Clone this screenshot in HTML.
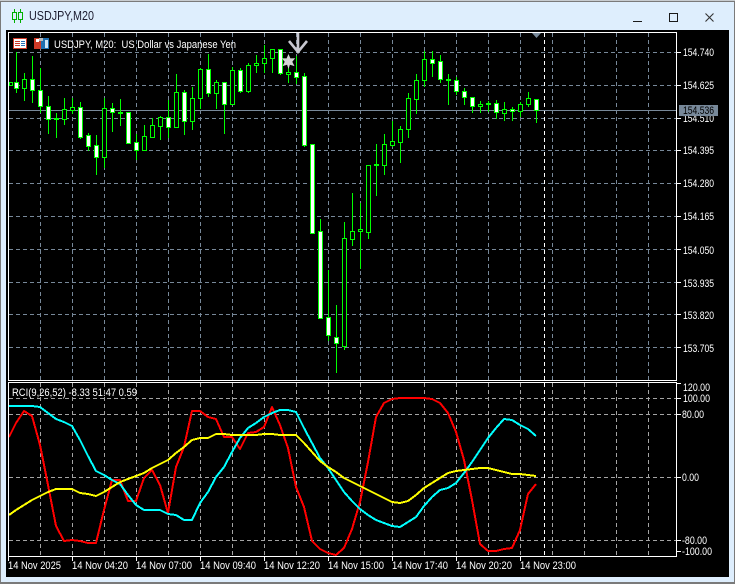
<!DOCTYPE html>
<html><head><meta charset="utf-8"><title>USDJPY,M20</title>
<style>
html,body{margin:0;padding:0;width:735px;height:584px;overflow:hidden;background:#fff}
svg{display:block}
text{font-family:"Liberation Sans",sans-serif;font-size:11px;fill:#fff}
</style></head><body>
<svg width="735" height="584" viewBox="0 0 735 584" xmlns="http://www.w3.org/2000/svg">
<rect x="0" y="0" width="735" height="584" fill="#7a7a7a"/>
<rect x="0" y="0" width="735" height="1" fill="#c8ccd0"/>
<rect x="1" y="2" width="733" height="580" fill="#deeefd"/>
<rect x="6" y="30" width="723" height="547" fill="#000"/>

<!-- title bar -->
<g fill="none" stroke="#00b000" shape-rendering="crispEdges">
<path d="M12.5 12.5h4v7h-4zM14.5 9v3M14.5 20v3M18.5 12.5h4v7h-4zM20.5 9v3M20.5 20v3"/>
</g>
<text x="29" y="20" style="font-size:12.5px;fill:#1c1c30" textLength="65" lengthAdjust="spacingAndGlyphs">USDJPY,M20</text>
<g fill="none" stroke="#1a1a1a" shape-rendering="crispEdges">
<path d="M633 21.5h9"/><path d="M669.5 13.5h8v8h-8z"/>
</g>
<path d="M705.5 13.5l8 8M713.5 13.5l-8 8" fill="none" stroke="#333" stroke-width="1.1"/>

<!-- grid main -->
<g fill="none" stroke="#778899" stroke-dasharray="4 3" shape-rendering="crispEdges">
<path d="M9 52.5H676M9 85.5H676M9 118.5H676M9 150.5H676M9 183.5H676M9 216.5H676M9 249.5H676M9 282.5H676M9 314.5H676M9 347.5H676"/>
<path d="M40.5 33V380M72.5 33V380M104.5 33V380M136.5 33V380M168.5 33V380M200.5 33V380M232.5 33V380M264.5 33V380M296.5 33V380M328.5 33V380M360.5 33V380M392.5 33V380M424.5 33V380M456.5 33V380M488.5 33V380M520.5 33V380M552.5 33V380M584.5 33V380M616.5 33V380M648.5 33V380"/>
</g>
<path d="M544.5 33V380" stroke="#fff" stroke-dasharray="4 3" fill="none" shape-rendering="crispEdges"/>
<path d="M9 110.5H676" stroke="#778899" fill="none" shape-rendering="crispEdges"/>

<!-- candles -->
<g shape-rendering="crispEdges">
<path fill="none" stroke="#00ff00" d="M16.5 52V93M24.5 73V101M32.5 56V103M40.5 68V113M48.5 96V134M56.5 113V138M64.5 98V125M72.5 98V114M80.5 102V139M88.5 133V151M96.5 135V175M104.5 98V168M112.5 103V132M120.5 99V126M128.5 112V143M136.5 134V160M144.5 125V150M152.5 118V137M160.5 116V140M168.5 100V138M176.5 74V127M184.5 90V135M192.5 87V130M200.5 68V109M208.5 54V97M216.5 80V109M224.5 82V134M232.5 67V104M240.5 68V93M248.5 63V93M256.5 55V73M264.5 45V73M272.5 49V73M280.5 49V75M288.5 60V83M296.5 56V84M304.5 73V147M320.5 219V318M328.5 270V341M336.5 305V373M344.5 222V350M352.5 193V246M360.5 203V269M368.5 165V239M376.5 144V196M384.5 134V175M392.5 121V147M400.5 126V163M408.5 93V138M416.5 74V114M424.5 51V87M432.5 51V77M440.5 55V83M448.5 74V105M456.5 77V95M464.5 88V105M472.5 97V113M480.5 101V113M488.5 101V112M496.5 100V119M504.5 102V121M512.5 107V121M520.5 102V117M528.5 92V107M536.5 99V123"/>
<path fill="#000" stroke="#00ff00" d="M9.5 82.5h3v3h-3zM22.5 79.5h4v9h-4zM62.5 109.5h4v10h-4zM70.5 107.5h4v3h-4zM102.5 108.5h4v49h-4zM142.5 136.5h4v14h-4zM150.5 125.5h4v12h-4zM158.5 117.5h4v9h-4zM174.5 92.5h4v35h-4zM190.5 98.5h4v23h-4zM198.5 69.5h4v29h-4zM214.5 82.5h4v11h-4zM230.5 70.5h4v34h-4zM246.5 65.5h4v26h-4zM254.5 63.5h4v2h-4zM262.5 58.5h4v5h-4zM270.5 49.5h4v9h-4zM286.5 72.5h4v2h-4zM342.5 238.5h4v108h-4zM350.5 231.5h4v8h-4zM358.5 229.5h4v2h-4zM366.5 165.5h4v67h-4zM382.5 144.5h4v21h-4zM390.5 141.5h4v4h-4zM398.5 129.5h4v13h-4zM406.5 98.5h4v31h-4zM414.5 80.5h4v19h-4zM422.5 59.5h4v21h-4zM478.5 104.5h4v2h-4zM502.5 109.5h4v4h-4zM518.5 104.5h4v7h-4zM526.5 98.5h4v6h-4z"/>
<path fill="#fff" stroke="#00ff00" d="M14.5 82.5h4v6h-4zM30.5 79.5h4v11h-4zM38.5 90.5h4v16h-4zM46.5 106.5h4v13h-4zM78.5 107.5h4v30h-4zM86.5 135.5h4v11h-4zM94.5 145.5h4v12h-4zM110.5 108.5h4v4h-4zM126.5 112.5h4v31h-4zM134.5 142.5h4v8h-4zM166.5 117.5h4v10h-4zM182.5 92.5h4v29h-4zM206.5 69.5h4v24h-4zM222.5 82.5h4v22h-4zM238.5 70.5h4v21h-4zM278.5 49.5h4v24h-4zM294.5 72.5h4v5h-4zM302.5 76.5h4v69h-4zM310.5 144.5h4v89h-4zM318.5 231.5h4v87h-4zM326.5 317.5h4v18h-4zM334.5 337.5h4v6h-4zM430.5 59.5h4v4h-4zM438.5 61.5h4v18h-4zM454.5 80.5h4v11h-4zM462.5 91.5h4v6h-4zM470.5 97.5h4v9h-4zM494.5 103.5h4v9h-4zM510.5 109.5h4v2h-4zM534.5 99.5h4v11h-4z"/>
<path fill="none" stroke="#00ff00" stroke-width="2" d="M54 119h5M118 113h5M374 165h5M446 80h5M486 104h5"/>
</g>

<!-- arrow + star + triangle -->
<path d="M298 32V51M289 41l9 11 9-11" fill="none" stroke="#c8c8d0" stroke-width="2.6"/>
<path d="M288.5 54l1.9 4.4 4.8-.2-2.9 3.6 2.2 4.3-4.6-1.4-1.4 4.3-1.4-4.3-4.6 1.4 2.2-4.3-2.9-3.6 4.8.2z" fill="#d4d4d4"/>
<path d="M532 33h9l-4.500 5z" fill="#778899"/>

<!-- header -->
<g shape-rendering="crispEdges">
<rect x="13.500" y="38.500" width="13" height="10" fill="#fff" stroke="#d03a28"/>
<path d="M15 41h5v1h-5zM15 43h5v1h-5zM15 45h5v1h-5z" fill="#d03a28"/>
<path d="M21 41h4v1h-4zM21 43h4v1h-4zM21 45h4v1h-4z" fill="#2a70b8"/>
<rect x="34" y="38" width="7" height="11" fill="#d03a28"/>
<rect x="36" y="39" width="3" height="3" fill="#fff"/>
<rect x="41" y="38" width="8" height="11" fill="#1f6fb0"/>
<rect x="39" y="38" width="4" height="3" fill="#bbb"/>
<rect x="45" y="40" width="3" height="8" fill="#cfe4f5"/>
</g>
<text x="54" y="48" textLength="182" lengthAdjust="spacingAndGlyphs" xml:space="preserve">USDJPY, M20:  US Dollar vs Japanese Yen</text>

<!-- sub grid -->
<g fill="none" stroke="#a4a4a4" stroke-dasharray="4 3" shape-rendering="crispEdges">
<path d="M9 398.500H676M9 414.500H676M9 477.500H676M9 540.500H676"/>
<path d="M40.500 383V556M72.500 383V556M104.500 383V556M136.500 383V556M168.500 383V556M200.500 383V556M232.500 383V556M264.500 383V556M296.500 383V556M328.500 383V556M360.500 383V556M392.500 383V556M424.500 383V556M456.500 383V556M488.500 383V556M520.500 383V556M552.500 383V556M584.500 383V556M616.500 383V556M648.500 383V556"/>
</g>
<path d="M544.500 383V556" stroke="#fff" stroke-dasharray="4 3" fill="none" shape-rendering="crispEdges"/>

<!-- lines -->
<g fill="none" stroke-width="2" shape-rendering="crispEdges" stroke-linejoin="round">
<polyline stroke="#ff0000" points="9,437 16,423 24,411 32,416 40,445 48,485 56,526 64,541 72,540 80,541 88,543 96,543 104,510 112,480 120,480 128,501 136,501 144,478 152,470 160,485 168,513 176,467 184,447 192,411 200,411 208,417 216,419 224,437 232,437 240,449 248,433 256,432 264,427 272,407 280,425 288,448 296,487 304,507 312,541 320,549 328,553 336,555 344,548 352,529 360,502 368,462 376,417 384,403 392,399 400,398 408,398 416,398 424,398 432,399 440,403 448,413 456,432 464,460 472,500 480,544 488,551 496,551 504,549 512,548 520,530 528,494 536,484"/>
<polyline stroke="#00ffff" points="9,406 32,406 40,407 48,413 56,419 64,422 72,426 80,440 88,456 96,471 104,475 112,480 120,484 128,495 136,505 144,510 160,510 168,514 176,515 184,520 192,520 200,503 208,492 216,477 224,467 232,452 240,438 248,428 256,423 264,417 272,413 280,410 288,410 296,412 304,428 312,443 320,458 328,468 336,480 344,492 352,501 360,509 368,515 376,520 384,523 392,526 400,527 408,522 416,517 424,506 432,497 440,490 448,488 456,483 464,473 472,462 480,450 488,438 496,428 504,419 512,420 520,425 528,429 536,436"/>
<polyline stroke="#ffff00" points="9,515 16,510 24,505 32,500 40,496 48,492 56,489 72,489 80,493 88,494 96,496 104,492 112,487 120,482 128,479 136,476 144,473 152,468 160,464 168,460 176,453 184,447 192,440 200,438 208,438 216,434 224,434 232,435 256,435 264,434 272,434 280,435 296,435 304,443 312,452 320,461 328,467 336,472 344,478 352,482 360,486 368,490 376,494 384,498 392,502 400,503 408,501 416,495 424,488 432,483 440,478 448,473 456,471 464,470 472,469 480,468 488,468 496,470 504,472 512,474 520,474 528,475 536,476"/>
</g>
<text x="12" y="396" textLength="125" lengthAdjust="spacingAndGlyphs">RCI(9,26,52) -8.33 51.47 0.59</text>

<!-- frames -->
<g fill="none" stroke="#fff" shape-rendering="crispEdges">
<path d="M8.500 32.500H676.500V380.500H8.500z"/>
<path d="M8.500 382.500H676.500V556.500H8.500z"/>
<path d="M677 52.500h4M677 85.500h4M677 118.500h4M677 150.500h4M677 183.500h4M677 216.500h4M677 249.500h4M677 282.500h4M677 314.500h4M677 347.500h4"/>
<path d="M677 383.500h4M677 398.500h4M677 414.500h4M677 477.500h4M677 540.500h4M677 551.500h4"/>
<path d="M8.500 557v4M72.500 557v4M136.500 557v4M200.500 557v4M264.500 557v4M328.500 557v4M392.500 557v4M456.500 557v4M520.500 557v4"/>
</g>

<!-- price axis -->
<g>
<text x="683" y="56" textLength="31" lengthAdjust="spacingAndGlyphs">154.740</text>
<text x="683" y="89" textLength="31" lengthAdjust="spacingAndGlyphs">154.625</text>
<text x="683" y="122" textLength="31" lengthAdjust="spacingAndGlyphs">154.510</text>
<text x="683" y="154" textLength="31" lengthAdjust="spacingAndGlyphs">154.395</text>
<text x="683" y="187" textLength="31" lengthAdjust="spacingAndGlyphs">154.280</text>
<text x="683" y="220" textLength="31" lengthAdjust="spacingAndGlyphs">154.165</text>
<text x="683" y="254" textLength="31" lengthAdjust="spacingAndGlyphs">154.050</text>
<text x="683" y="287" textLength="31" lengthAdjust="spacingAndGlyphs">153.935</text>
<text x="683" y="319" textLength="31" lengthAdjust="spacingAndGlyphs">153.820</text>
<text x="683" y="352" textLength="31" lengthAdjust="spacingAndGlyphs">153.705</text>
</g>
<rect x="679" y="105" width="39" height="11" fill="#778899"/>
<text x="683" y="114" textLength="31" lengthAdjust="spacingAndGlyphs" style="fill:#000">154.536</text>

<g>
<text x="683" y="391" textLength="27" lengthAdjust="spacingAndGlyphs">120.00</text>
<text x="683" y="402" textLength="27" lengthAdjust="spacingAndGlyphs">100.00</text>
<text x="682" y="418" textLength="22" lengthAdjust="spacingAndGlyphs">80.00</text>
<text x="682" y="481" textLength="17" lengthAdjust="spacingAndGlyphs">0.00</text>
<text x="682" y="544" textLength="25" lengthAdjust="spacingAndGlyphs">-80.00</text>
<text x="682" y="555" textLength="30" lengthAdjust="spacingAndGlyphs">-100.00</text>
</g>

<!-- time axis -->
<g>
<text x="8" y="569" textLength="53" lengthAdjust="spacingAndGlyphs">14 Nov 2025</text>
<text x="72" y="569" textLength="56" lengthAdjust="spacingAndGlyphs">14 Nov 04:20</text>
<text x="136" y="569" textLength="56" lengthAdjust="spacingAndGlyphs">14 Nov 07:00</text>
<text x="200" y="569" textLength="56" lengthAdjust="spacingAndGlyphs">14 Nov 09:40</text>
<text x="264" y="569" textLength="56" lengthAdjust="spacingAndGlyphs">14 Nov 12:20</text>
<text x="328" y="569" textLength="56" lengthAdjust="spacingAndGlyphs">14 Nov 15:00</text>
<text x="392" y="569" textLength="56" lengthAdjust="spacingAndGlyphs">14 Nov 17:40</text>
<text x="456" y="569" textLength="56" lengthAdjust="spacingAndGlyphs">14 Nov 20:20</text>
<text x="520" y="569" textLength="56" lengthAdjust="spacingAndGlyphs">14 Nov 23:00</text>
</g>
</svg>
</body></html>
